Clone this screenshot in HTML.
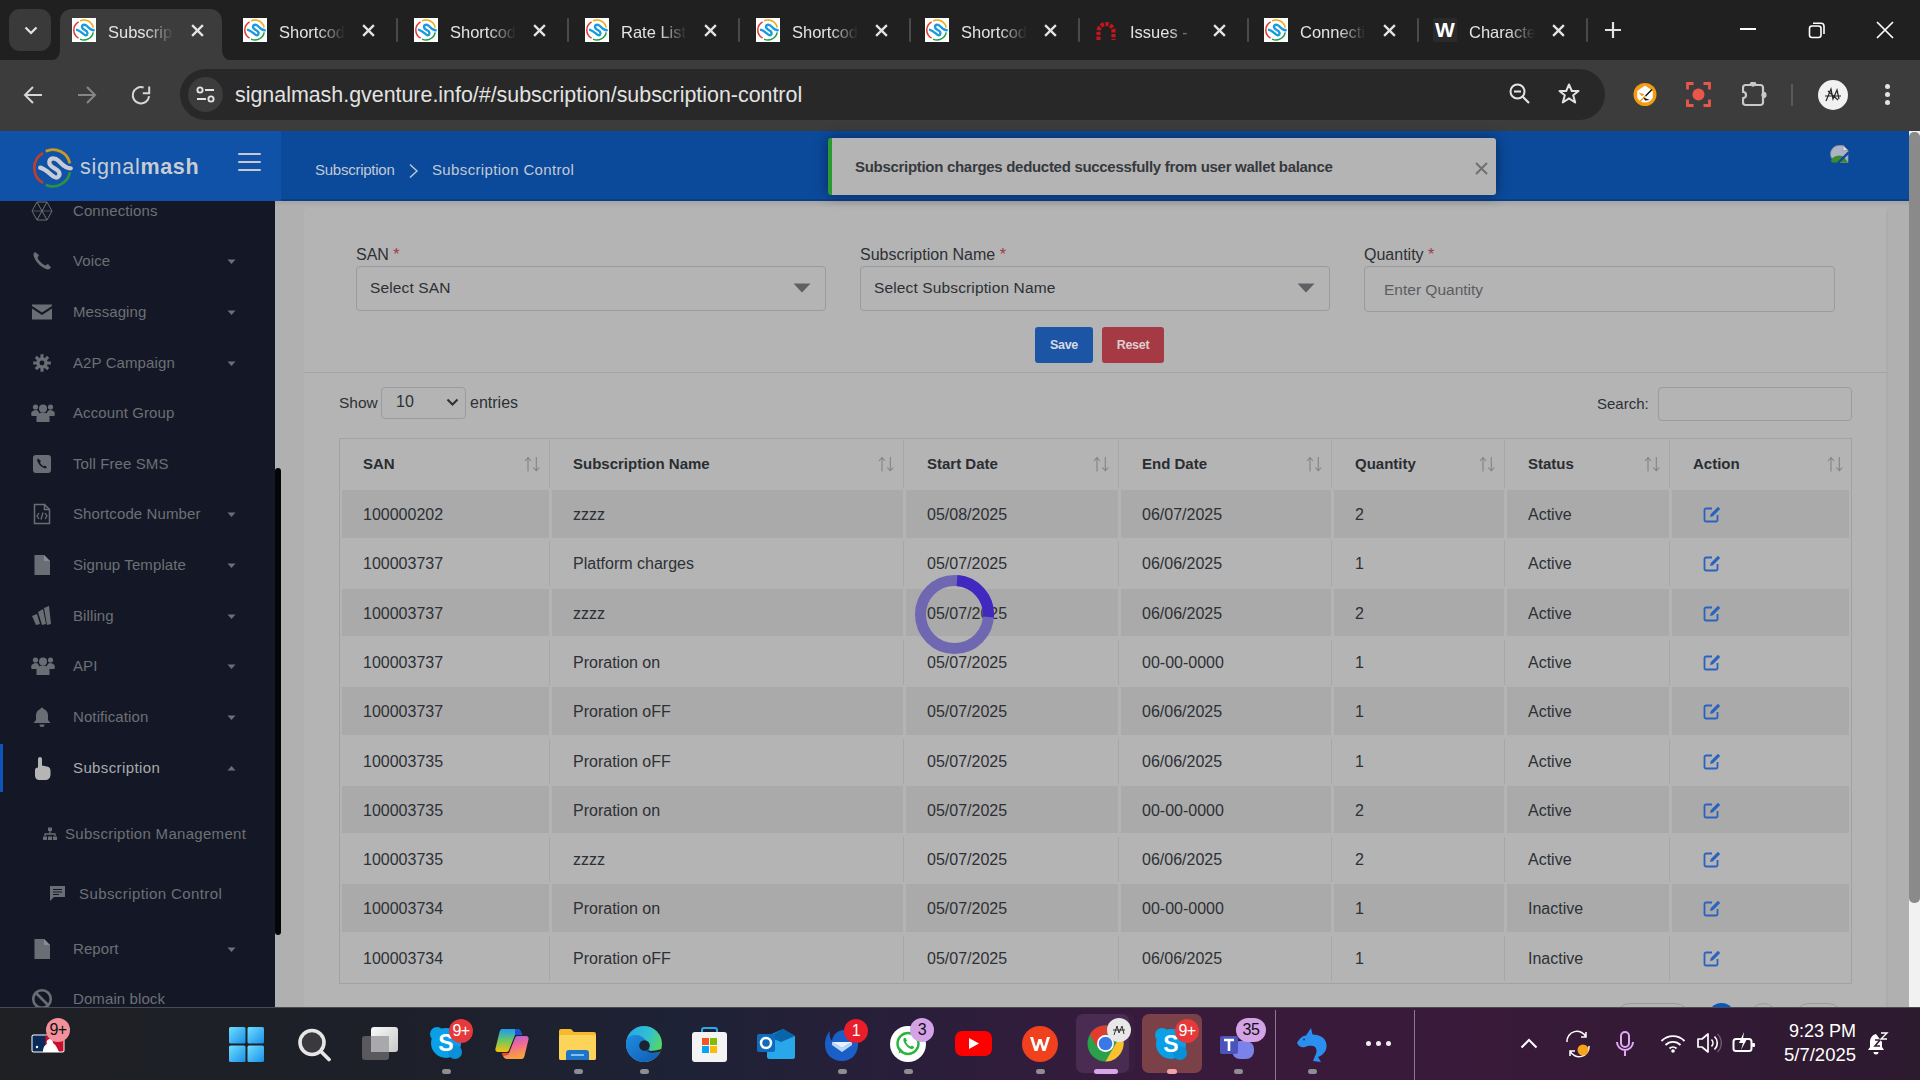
<!DOCTYPE html><html><head><meta charset="utf-8"><style>
*{box-sizing:border-box;margin:0;padding:0}
html,body{width:1920px;height:1080px;overflow:hidden;background:#202020;font-family:"Liberation Sans",sans-serif}
.a{position:absolute}
#tabstrip{position:absolute;left:0;top:0;width:1920px;height:60px;background:#202020}
#toolbar{position:absolute;left:0;top:60px;width:1920px;height:71px;background:#3c3c3c}
#omni{position:absolute;left:180px;top:69px;width:1425px;height:51px;background:#282828;border-radius:26px}
#header{position:absolute;left:0;top:131px;width:1909px;height:70px;background:#0b4a9b}
#logoarea{position:absolute;left:0;top:131px;width:281px;height:70px;background:#0f52a8}
#sidebar{position:absolute;left:0;top:201px;width:275px;height:807px;background:#141826;overflow:hidden}
#content{position:absolute;left:275px;top:201px;width:1634px;height:807px;background:#b0b0b0;overflow:hidden}
#vscroll{position:absolute;left:1909px;top:131px;width:11px;height:877px;background:#f1f1f1}
#taskbar{position:absolute;left:0;top:1008px;width:1920px;height:72px;background:linear-gradient(90deg,#1e2024 0%,#1d2029 20%,#1e2236 36%,#2a1e3a 48%,#381a3c 60%,#3a1a3a 75%,#2c1a2f 100%)}
.tabt{position:absolute;top:19px;height:26px;font-size:16.5px;line-height:26px;color:#e3e3e3;white-space:nowrap;overflow:hidden;width:66px;
 -webkit-mask-image:linear-gradient(90deg,#000 58%,transparent 100%)}
.fav{position:absolute;top:18px;width:24px;height:24px;background:#fff}
.tclose{position:absolute;top:23.5px;width:13px;height:13px}
.tsep{position:absolute;top:18px;width:2px;height:24px;background:#4a4a4a;border-radius:1px}
</style></head><body>
<svg width="0" height="0" style="position:absolute"><defs>
<symbol id="smlogo" viewBox="0 0 24 24">
<path d="M6.6 3.8 A9.4 9.4 0 0 0 6.6 20.2" fill="none" stroke="#e03a2a" stroke-width="1.5"/>
<path d="M8 2.9 A9.4 9.4 0 0 1 21.2 9.6" fill="none" stroke="#f0aa10" stroke-width="1.5"/>
<path d="M21.2 14.3 A9.4 9.4 0 0 1 8 21.1" fill="none" stroke="#1aa040" stroke-width="1.5"/>
<path d="M5 11.8 C8 12.5 10.5 15.5 12.5 16.8 C14.5 18 16.5 16 15 13.8 C13.5 11.8 9.5 11.5 10 8.5 C10.5 6 13.5 6.5 15 8 C16.5 9.5 18.5 12.2 21.7 12.2" fill="none" stroke="#1a9ae0" stroke-width="2.4" stroke-linecap="round"/>
</symbol>
<symbol id="smlogoD" viewBox="0 0 24 24">
<path d="M6.6 3.8 A9.4 9.4 0 0 0 6.6 20.2" fill="none" stroke="#b8402e" stroke-width="1.5"/>
<path d="M8 2.9 A9.4 9.4 0 0 1 21.2 9.6" fill="none" stroke="#c99a22" stroke-width="1.5"/>
<path d="M21.2 14.3 A9.4 9.4 0 0 1 8 21.1" fill="none" stroke="#2d9142" stroke-width="1.5"/>
<path d="M5 11.8 C8 12.5 10.5 15.5 12.5 16.8 C14.5 18 16.5 16 15 13.8 C13.5 11.8 9.5 11.5 10 8.5 C10.5 6 13.5 6.5 15 8 C16.5 9.5 18.5 12.2 21.7 12.2" fill="none" stroke="#c9ccd2" stroke-width="2.3" stroke-linecap="round"/>
</symbol>
<symbol id="xic" viewBox="0 0 14 14"><path d="M1.2 1.2L12.8 12.8M12.8 1.2L1.2 12.8" stroke="#e3e3e3" stroke-width="2.5" fill="none"/></symbol>
</defs></svg>
<div id="tabstrip"></div>
<div class="a" style="left:9px;top:9px;width:42px;height:42px;border-radius:11px;background:#3a3a3a"></div>
<svg class="a" style="left:23px;top:24px" width="16" height="12" viewBox="0 0 16 12"><path d="M2.5 3.5L8 9L13.5 3.5" stroke="#e3e3e3" stroke-width="2.2" fill="none"/></svg>
<svg class="a" style="left:48px;top:9px" width="186" height="52" viewBox="0 0 186 52">
<path d="M0 52 C8 52 12 48 12 40 L12 12 C12 5 17 0 24 0 L162 0 C169 0 174 5 174 12 L174 40 C174 48 178 52 186 52 Z" fill="#3c3c3c"/></svg>
<div class="fav" style="left:72px"><svg width="24" height="24" viewBox="0 0 24 24"><use href="#smlogo"/></svg></div>
<div class="tabt" style="left:108px;width:66px;color:#e3e3e3">Subscription Control</div>
<svg class="tclose" style="left:191px" viewBox="0 0 14 14"><use href="#xic"/></svg>
<div class="fav" style="left:243px"><svg width="24" height="24" viewBox="0 0 24 24"><use href="#smlogo"/></svg></div>
<div class="tabt" style="left:279px;width:66px;color:#e3e3e3">Shortcode</div>
<svg class="tclose" style="left:362px" viewBox="0 0 14 14"><use href="#xic"/></svg>
<div class="tsep" style="left:396px"></div>
<div class="fav" style="left:414px"><svg width="24" height="24" viewBox="0 0 24 24"><use href="#smlogo"/></svg></div>
<div class="tabt" style="left:450px;width:66px;color:#e3e3e3">Shortcode</div>
<svg class="tclose" style="left:533px" viewBox="0 0 14 14"><use href="#xic"/></svg>
<div class="tsep" style="left:567px"></div>
<div class="fav" style="left:585px"><svg width="24" height="24" viewBox="0 0 24 24"><use href="#smlogo"/></svg></div>
<div class="tabt" style="left:621px;width:66px;color:#e3e3e3">Rate List</div>
<svg class="tclose" style="left:704px" viewBox="0 0 14 14"><use href="#xic"/></svg>
<div class="tsep" style="left:738px"></div>
<div class="fav" style="left:756px"><svg width="24" height="24" viewBox="0 0 24 24"><use href="#smlogo"/></svg></div>
<div class="tabt" style="left:792px;width:66px;color:#e3e3e3">Shortcode</div>
<svg class="tclose" style="left:875px" viewBox="0 0 14 14"><use href="#xic"/></svg>
<div class="tsep" style="left:909px"></div>
<div class="fav" style="left:925px"><svg width="24" height="24" viewBox="0 0 24 24"><use href="#smlogo"/></svg></div>
<div class="tabt" style="left:961px;width:66px;color:#e3e3e3">Shortcode</div>
<svg class="tclose" style="left:1044px" viewBox="0 0 14 14"><use href="#xic"/></svg>
<div class="tsep" style="left:1078px"></div>
<svg class="a" style="left:1094px;top:18px" width="24" height="24" viewBox="0 0 24 24">
<path d="M4.5 22V13.5A7.5 7.5 0 0 1 19.5 13.5V22" fill="none" stroke="#c4161c" stroke-width="4.2" stroke-dasharray="3.4 1.5"/></svg>
<div class="tabt" style="left:1130px;width:66px;color:#e3e3e3">Issues - </div>
<svg class="tclose" style="left:1213px" viewBox="0 0 14 14"><use href="#xic"/></svg>
<div class="tsep" style="left:1247px"></div>
<div class="fav" style="left:1264px"><svg width="24" height="24" viewBox="0 0 24 24"><use href="#smlogo"/></svg></div>
<div class="tabt" style="left:1300px;width:66px;color:#e3e3e3">Connections</div>
<svg class="tclose" style="left:1383px" viewBox="0 0 14 14"><use href="#xic"/></svg>
<div class="tsep" style="left:1417px"></div>
<div class="a" style="left:1433px;top:18px;width:24px;height:24px;background:#2a2a2a;color:#fff;font-weight:bold;font-size:21px;line-height:24px;text-align:center">W</div>
<div class="tabt" style="left:1469px;width:66px;color:#e3e3e3">Character</div>
<svg class="tclose" style="left:1552px" viewBox="0 0 14 14"><use href="#xic"/></svg>
<div class="tsep" style="left:1586px"></div>
<svg class="a" style="left:1604px;top:21px" width="18" height="18" viewBox="0 0 18 18"><path d="M9 1V17M1 9H17" stroke="#e3e3e3" stroke-width="2.2"/></svg>
<div class="a" style="left:1740px;top:28px;width:16px;height:2px;background:#fff"></div>
<svg class="a" style="left:1808px;top:21px" width="18" height="18" viewBox="0 0 18 18"><rect x="1.5" y="5" width="11.5" height="11.5" rx="2.5" stroke="#fff" stroke-width="1.6" fill="none"/><path d="M5 2.2 H13 A3 3 0 0 1 16 5.2 V13" stroke="#fff" stroke-width="1.6" fill="none"/></svg>
<svg class="a" style="left:1876px;top:21px" width="18" height="18" viewBox="0 0 18 18"><path d="M1 1L17 17M17 1L1 17" stroke="#fff" stroke-width="1.7"/></svg>
<div id="toolbar"></div>
<div id="omni"></div>
<svg class="a" style="left:22px;top:84px" width="22" height="22" viewBox="0 0 22 22"><path d="M20 11H3.5M11 3L3 11L11 19" stroke="#d6d6d6" stroke-width="2" fill="none"/></svg>
<svg class="a" style="left:76px;top:84px" width="22" height="22" viewBox="0 0 22 22"><path d="M2 11H18.5M11 3L19 11L11 19" stroke="#868686" stroke-width="2" fill="none"/></svg>
<svg class="a" style="left:130px;top:84px" width="22" height="22" viewBox="0 0 22 22"><path d="M19.1 12.2A8.2 8.2 0 1 1 13.6 3.5" stroke="#d6d6d6" stroke-width="2" fill="none"/><path d="M12.8 9.2H19.2V2.6" stroke="#d6d6d6" stroke-width="2" fill="none"/></svg>
<div class="a" style="left:188px;top:77px;width:35px;height:35px;border-radius:50%;background:#3c3c3c"></div>
<svg class="a" style="left:195px;top:84px" width="21" height="21" viewBox="0 0 21 21"><circle cx="5" cy="6" r="2.6" stroke="#e3e3e3" stroke-width="1.9" fill="none"/><path d="M10 6H19M2 15H11" stroke="#e3e3e3" stroke-width="1.9"/><circle cx="16" cy="15" r="2.6" stroke="#e3e3e3" stroke-width="1.9" fill="none"/></svg>
<div class="a" id="url" style="left:235px;top:80px;height:30px;font-size:21.4px;line-height:30px;color:#e3e3e3;white-space:nowrap">signalmash.gventure.info/#/subscription/subscription-control</div>
<svg class="a" style="left:1508px;top:82px" width="24" height="24" viewBox="0 0 24 24"><circle cx="9.5" cy="9.5" r="7" stroke="#e3e3e3" stroke-width="2" fill="none"/><path d="M6 9.5H13M14.5 14.5L21 21" stroke="#e3e3e3" stroke-width="2.2"/></svg>
<svg class="a" style="left:1557px;top:82px" width="24" height="24" viewBox="0 0 24 24"><path d="M12 2.5L14.8 9H21.5L16.2 13.2L18.2 20.5L12 16.3L5.8 20.5L7.8 13.2L2.5 9H9.2Z" stroke="#e3e3e3" stroke-width="2" fill="none" stroke-linejoin="round"/></svg>
<svg class="a" style="left:1633px;top:83px" width="24" height="24" viewBox="0 0 24 24"><circle cx="12" cy="11.5" r="11.5" fill="#f39c12"/><path d="M12 2.6L19.8 8V14.5A8.6 8.6 0 0 1 4.2 14.5V8Z" fill="#fff"/><path d="M19 6.5L12.5 13" stroke="#111" stroke-width="1.4"/><path d="M12.5 13L6.5 19" stroke="#f39c12" stroke-width="1.4"/><path d="M5.5 9.5L11.5 11.2L9 13.3Z" fill="#f39c12"/><path d="M10.5 14.5L16.8 17L12 17.5Z" fill="#111"/></svg>
<svg class="a" style="left:1686px;top:82px" width="25" height="25" viewBox="0 0 25 25"><path d="M1.5 7.5V1.5H7.5M17.5 1.5H23.5V7.5M23.5 17.5V23.5H17.5M7.5 23.5H1.5V17.5" stroke="#e9574a" stroke-width="2.8" fill="none"/><circle cx="12.5" cy="12.5" r="6" fill="#e9574a"/></svg>
<svg class="a" style="left:1742px;top:82px" width="25" height="25" viewBox="0 0 25 25"><path d="M3.5 3H8.5A2.5 2.5 0 0 1 13.5 3H18.5A2.5 2.5 0 0 1 21 5.5V10.5A2.5 2.5 0 0 1 21 15.5V20.5A2.5 2.5 0 0 1 18.5 23H3.5A2.5 2.5 0 0 1 1 20.5V16A3 3 0 0 0 1 10V5.5A2.5 2.5 0 0 1 3.5 3Z" stroke="#c9c9c9" stroke-width="2.2" fill="none" stroke-linejoin="round"/><circle cx="11" cy="2.6" r="2.2" fill="#c9c9c9"/><circle cx="21.4" cy="13" r="2.2" fill="#c9c9c9"/></svg>
<div class="a" style="left:1791px;top:84px;width:2px;height:22px;background:#5a5a5a"></div>
<div class="a" style="left:1818px;top:80px;width:30px;height:30px;border-radius:50%;background:#f1f1f1"></div>
<svg class="a" style="left:1823px;top:85px" width="20" height="20" viewBox="0 0 20 20"><path d="M3 16L8 4L10 14L14 5L16 14M2 11H18M5 6L15 15" stroke="#222" stroke-width="1.2" fill="none"/></svg>
<div class="a" style="left:1885px;top:84px;width:5px;height:5px;border-radius:50%;background:#e3e3e3"></div>
<div class="a" style="left:1885px;top:92px;width:5px;height:5px;border-radius:50%;background:#e3e3e3"></div>
<div class="a" style="left:1885px;top:100px;width:5px;height:5px;border-radius:50%;background:#e3e3e3"></div>
<div id="header"></div><div id="logoarea"></div>
<div class="a" style="left:281px;top:199px;width:1628px;height:2px;background:#0a3f88"></div>
<svg class="a" style="left:31px;top:146px" width="44" height="44" viewBox="0 0 24 24"><use href="#smlogoD"/></svg>
<div class="a" style="left:80px;top:152px;height:30px;line-height:30px;font-size:21.5px;color:#c9ccd2;white-space:nowrap;letter-spacing:0.7px"><span>signal</span><span style="font-weight:bold">mash</span></div>
<div class="a" style="left:238px;top:153px;width:23px;height:2px;background:#c6c9cf;border-radius:1px"></div>
<div class="a" style="left:238px;top:161px;width:23px;height:2px;background:#c6c9cf;border-radius:1px"></div>
<div class="a" style="left:238px;top:169px;width:23px;height:2px;background:#c6c9cf;border-radius:1px"></div>
<div class="a" style="left:315px;top:160px;height:20px;line-height:20px;font-size:15px;color:#c3c9d3;white-space:nowrap;letter-spacing:-0.25px">Subscription</div>
<svg class="a" style="left:408px;top:163px" width="11" height="16" viewBox="0 0 11 16"><path d="M2 1.5L9 8L2 14.5" stroke="#c3c9d3" stroke-width="1.4" fill="none"/></svg>
<div class="a" style="left:432px;top:160px;height:20px;line-height:20px;font-size:15px;color:#c3c9d3;white-space:nowrap;letter-spacing:0.36px">Subscription Control</div>
<svg class="a" style="left:1830px;top:145px" width="19" height="18" viewBox="0 0 19 18"><path d="M9 0.5H13L18 5.5V17.5H9A8.5 8.5 0 0 1 9 0.5Z" fill="#aab4c6" stroke="#8d8f93" stroke-width="0.7"/><path d="M1 16A8 6.5 0 0 1 14.5 12.5L18 17.5H2Z" fill="#3c8a2e"/><path d="M7.5 18.5L18.5 7.5" stroke="#0b4a9b" stroke-width="2.4"/><path d="M13 0.5V5.5H18Z" fill="#e2e2e2" stroke="#8d8f93" stroke-width="0.6"/></svg>
<div id="sidebar">
<div class="a" style="left:31px;top:-1px;width:24px;height:24px"><svg width="22" height="22" viewBox="0 0 22 22"><path d="M6 2H16L21 11L16 20H6L1 11Z" stroke="#6a6e74" stroke-width="1" fill="none"/><path d="M6 2L16 20M16 2L6 20M1 11H21M6 2L11 11L16 2M6 20L11 11L16 20" stroke="#6a6e74" stroke-width="0.7" fill="none"/></svg></div>
<div class="a" style="left:73px;top:-1px;height:22px;line-height:22px;font-size:15px;color:#6c7075;white-space:nowrap;letter-spacing:0.1px">Connections</div>
<div class="a" style="left:31px;top:49px;width:24px;height:24px"><svg width="22" height="22" viewBox="0 0 22 22"><path d="M4 2C2.5 3 2 4.5 3 7C5 12 9 16.5 15 19C17.5 20 19 19 20 17.5L17 14L14 15.5C11 14 8 11 6.5 8L8 5Z" fill="#6a6e74"/></svg></div>
<div class="a" style="left:73px;top:49px;height:22px;line-height:22px;font-size:15px;color:#6c7075;white-space:nowrap;letter-spacing:0.1px">Voice</div>
<svg class="a" style="left:227px;top:58px" width="9" height="6" viewBox="0 0 9 6"><path d="M0.5 0.5L4.5 5L8.5 0.5Z" fill="#6c7075"/></svg>
<div class="a" style="left:31px;top:100px;width:24px;height:24px"><svg width="22" height="22" viewBox="0 0 22 22"><path d="M1 3.5H21V5L11 11.5L1 5Z" fill="#6a6e74"/><path d="M1 7.5L11 14L21 7.5V18.5H1Z" fill="#6a6e74"/></svg></div>
<div class="a" style="left:73px;top:100px;height:22px;line-height:22px;font-size:15px;color:#6c7075;white-space:nowrap;letter-spacing:0.1px">Messaging</div>
<svg class="a" style="left:227px;top:109px" width="9" height="6" viewBox="0 0 9 6"><path d="M0.5 0.5L4.5 5L8.5 0.5Z" fill="#6c7075"/></svg>
<div class="a" style="left:31px;top:151px;width:24px;height:24px"><svg width="22" height="22" viewBox="-1.5 -1.5 25 25"><circle cx="11" cy="11" r="6.5" fill="#6a6e74"/><path d="M11 1V21M1 11H21M4 4L18 18M18 4L4 18" stroke="#6a6e74" stroke-width="3.5"/><circle cx="11" cy="11" r="2.8" fill="#141826"/></svg></div>
<div class="a" style="left:73px;top:151px;height:22px;line-height:22px;font-size:15px;color:#6c7075;white-space:nowrap;letter-spacing:0.1px">A2P Campaign</div>
<svg class="a" style="left:227px;top:160px" width="9" height="6" viewBox="0 0 9 6"><path d="M0.5 0.5L4.5 5L8.5 0.5Z" fill="#6c7075"/></svg>
<div class="a" style="left:31px;top:201px;width:24px;height:24px"><svg width="24" height="22" viewBox="0 0 24 22"><circle cx="12" cy="6.5" r="4" fill="#6a6e74"/><circle cx="4.5" cy="5" r="2.6" fill="#6a6e74"/><circle cx="19.5" cy="5" r="2.6" fill="#6a6e74"/><path d="M5.5 20V15A6.5 4.5 0 0 1 18.5 15V20Z" fill="#6a6e74"/><path d="M0.5 13A4 3.5 0 0 1 8 10.5V14H0.5Z M23.5 13A4 3.5 0 0 0 16 10.5V14H23.5Z" fill="#6a6e74"/></svg></div>
<div class="a" style="left:73px;top:201px;height:22px;line-height:22px;font-size:15px;color:#6c7075;white-space:nowrap;letter-spacing:0.1px">Account Group</div>
<div class="a" style="left:31px;top:252px;width:24px;height:24px"><svg width="22" height="22" viewBox="0 0 22 22"><rect x="2" y="2" width="18" height="18" rx="3" fill="#6a6e74"/><path d="M7 5.5C6 6 6 7 6.5 8.5C7.5 11 9.5 13.5 13 15C14.5 15.5 15.5 15 16 14.5L14 12.5L12.5 13.3C11 12.5 9.8 11.2 9 9.6L10 8Z" fill="#141826"/></svg></div>
<div class="a" style="left:73px;top:252px;height:22px;line-height:22px;font-size:15px;color:#6c7075;white-space:nowrap;letter-spacing:0.1px">Toll Free SMS</div>
<div class="a" style="left:31px;top:302px;width:24px;height:24px"><svg width="22" height="22" viewBox="0 0 22 22"><path d="M3.5 1.5H13.5L18.5 6.5V20.5H3.5Z" stroke="#6a6e74" stroke-width="1.5" fill="none"/><path d="M13.5 1.5V6.5H18.5" stroke="#6a6e74" stroke-width="1.5" fill="none"/><path d="M8 10L6 13L8 16M14 10L16 13L14 16M12 9.5L10 16.5" stroke="#6a6e74" stroke-width="1.3" fill="none"/></svg></div>
<div class="a" style="left:73px;top:302px;height:22px;line-height:22px;font-size:15px;color:#6c7075;white-space:nowrap;letter-spacing:0.1px">Shortcode Number</div>
<svg class="a" style="left:227px;top:311px" width="9" height="6" viewBox="0 0 9 6"><path d="M0.5 0.5L4.5 5L8.5 0.5Z" fill="#6c7075"/></svg>
<div class="a" style="left:31px;top:353px;width:24px;height:24px"><svg width="22" height="22" viewBox="0 0 22 22"><path d="M3.5 1H13L19 7V21H3.5Z" fill="#6a6e74"/><path d="M13 1V7H19" fill="#8a8e94"/></svg></div>
<div class="a" style="left:73px;top:353px;height:22px;line-height:22px;font-size:15px;color:#6c7075;white-space:nowrap;letter-spacing:0.1px">Signup Template</div>
<svg class="a" style="left:227px;top:362px" width="9" height="6" viewBox="0 0 9 6"><path d="M0.5 0.5L4.5 5L8.5 0.5Z" fill="#6c7075"/></svg>
<div class="a" style="left:31px;top:404px;width:24px;height:24px"><svg width="22" height="22" viewBox="0 0 22 22"><path d="M1 11L6 9L9 19L5 20Z M7 7L12 4L15 19L11 20Z M13 3L18 1L20 19L16 20Z" fill="#6a6e74"/></svg></div>
<div class="a" style="left:73px;top:404px;height:22px;line-height:22px;font-size:15px;color:#6c7075;white-space:nowrap;letter-spacing:0.1px">Billing</div>
<svg class="a" style="left:227px;top:413px" width="9" height="6" viewBox="0 0 9 6"><path d="M0.5 0.5L4.5 5L8.5 0.5Z" fill="#6c7075"/></svg>
<div class="a" style="left:31px;top:454px;width:24px;height:24px"><svg width="24" height="22" viewBox="0 0 24 22"><circle cx="12" cy="6.5" r="4" fill="#6a6e74"/><circle cx="4.5" cy="5" r="2.6" fill="#6a6e74"/><circle cx="19.5" cy="5" r="2.6" fill="#6a6e74"/><path d="M5.5 20V15A6.5 4.5 0 0 1 18.5 15V20Z" fill="#6a6e74"/><path d="M0.5 13A4 3.5 0 0 1 8 10.5V14H0.5Z M23.5 13A4 3.5 0 0 0 16 10.5V14H23.5Z" fill="#6a6e74"/></svg></div>
<div class="a" style="left:73px;top:454px;height:22px;line-height:22px;font-size:15px;color:#6c7075;white-space:nowrap;letter-spacing:0.1px">API</div>
<svg class="a" style="left:227px;top:463px" width="9" height="6" viewBox="0 0 9 6"><path d="M0.5 0.5L4.5 5L8.5 0.5Z" fill="#6c7075"/></svg>
<div class="a" style="left:31px;top:505px;width:24px;height:24px"><svg width="22" height="22" viewBox="0 0 22 22"><path d="M11 1.5A1.8 1.8 0 0 1 12.6 3C15.5 3.8 17 6.5 17 9.5V14L19.5 17H2.5L5 14V9.5C5 6.5 6.5 3.8 9.4 3A1.8 1.8 0 0 1 11 1.5Z M8.5 18.5H13.5A2.5 2.5 0 0 1 8.5 18.5Z" fill="#6a6e74"/></svg></div>
<div class="a" style="left:73px;top:505px;height:22px;line-height:22px;font-size:15px;color:#6c7075;white-space:nowrap;letter-spacing:0.1px">Notification</div>
<svg class="a" style="left:227px;top:514px" width="9" height="6" viewBox="0 0 9 6"><path d="M0.5 0.5L4.5 5L8.5 0.5Z" fill="#6c7075"/></svg>
<div class="a" style="left:31px;top:556px;width:24px;height:24px"><svg width="22" height="24" viewBox="0 0 22 24"><path d="M7 2A2 2 0 0 1 11 2V8.5L16 9.5C18.5 10 19.5 11.5 19.5 14V17.5C19.5 21 17.5 23 14 23H9C5.5 23 4 21 4 18V13C4 11.5 5 10.5 7 10.5Z" fill="#b5b5b5"/></svg></div>
<div class="a" style="left:73px;top:556px;height:22px;line-height:22px;font-size:15px;color:#a9abad;white-space:nowrap;letter-spacing:0.38px">Subscription</div>
<svg class="a" style="left:227px;top:564px" width="9" height="6" viewBox="0 0 9 6"><path d="M0.5 5.5L4.5 1L8.5 5.5Z" fill="#6c7075"/></svg>
<div class="a" style="left:31px;top:737px;width:24px;height:24px"><svg width="22" height="22" viewBox="0 0 22 22"><path d="M3.5 1H13L19 7V21H3.5Z" fill="#6a6e74"/><path d="M13 1V7H19" fill="#8a8e94"/></svg></div>
<div class="a" style="left:73px;top:737px;height:22px;line-height:22px;font-size:15px;color:#6c7075;white-space:nowrap;letter-spacing:0.1px">Report</div>
<svg class="a" style="left:227px;top:746px" width="9" height="6" viewBox="0 0 9 6"><path d="M0.5 0.5L4.5 5L8.5 0.5Z" fill="#6c7075"/></svg>
<div class="a" style="left:31px;top:787px;width:24px;height:24px"><svg width="22" height="22" viewBox="0 0 22 22"><circle cx="11" cy="11" r="8.8" stroke="#6a6e74" stroke-width="2.6" fill="none"/><path d="M5 5L17 17" stroke="#6a6e74" stroke-width="2.6"/></svg></div>
<div class="a" style="left:73px;top:787px;height:22px;line-height:22px;font-size:15px;color:#6c7075;white-space:nowrap;letter-spacing:0.1px">Domain block</div>
<div class="a" style="left:0;top:543px;width:3px;height:48px;background:#0d56b8"></div>
<svg class="a" style="left:42px;top:626px" width="16" height="14" viewBox="0 0 16 14"><rect x="6" y="0.5" width="4" height="3.5" fill="#6a6e74"/><path d="M8 4V7M3 9V7H13V9" stroke="#6a6e74" stroke-width="1.3" fill="none"/><rect x="1" y="9.5" width="4" height="3.5" fill="#6a6e74"/><rect x="6" y="9.5" width="4" height="3.5" fill="#6a6e74"/><rect x="11" y="9.5" width="4" height="3.5" fill="#6a6e74"/></svg>
<div class="a" style="left:65px;top:622px;height:22px;line-height:22px;font-size:15px;color:#6c7075;white-space:nowrap;letter-spacing:0.3px">Subscription Management</div>
<svg class="a" style="left:49px;top:684px" width="17" height="17" viewBox="0 0 17 17"><path d="M1 1H16V12H5L1 16Z" fill="#6a6e74"/><path d="M4 4.5H13M4 7H13M4 9.5H10" stroke="#141826" stroke-width="1.2"/></svg>
<div class="a" style="left:79px;top:682px;height:22px;line-height:22px;font-size:15px;color:#6c7075;white-space:nowrap;letter-spacing:0.41px">Subscription Control</div>
</div>
<div id="content"></div>
<div class="a" style="left:275px;top:201px;width:1634px;height:6px;background:linear-gradient(#a5a5a5,#b2b2b2)"></div>
<div class="a" style="left:304px;top:207px;width:1583px;height:801px;background:#b4b4b4;border-radius:5px"></div>
<div class="a" style="left:1886px;top:212px;width:2px;height:796px;background:#acacac"></div>
<div class="a" style="left:304px;top:372px;width:1583px;height:1px;background:#a4a4a4"></div>
<div class="a" style="left:356px;top:245px;height:20px;line-height:20px;font-size:16px;color:#2d3034;white-space:nowrap">SAN <span style="color:#9c3a48">*</span></div>
<div class="a" style="left:356px;top:266px;width:470px;height:45px;border:1px solid #999b9e;border-radius:4px"></div>
<div class="a" style="left:370px;top:278px;height:20px;line-height:20px;font-size:15.5px;color:#2d3034;white-space:nowrap;letter-spacing:0.13px">Select SAN</div>
<svg class="a" style="left:793px;top:283px" width="18" height="10" viewBox="0 0 18 10"><path d="M0.5 0.5H17.5L9 9.5Z" fill="#5e6063"/></svg>
<div class="a" style="left:860px;top:245px;height:20px;line-height:20px;font-size:16px;color:#2d3034;white-space:nowrap">Subscription Name <span style="color:#9c3a48">*</span></div>
<div class="a" style="left:860px;top:266px;width:470px;height:45px;border:1px solid #999b9e;border-radius:4px"></div>
<div class="a" style="left:874px;top:278px;height:20px;line-height:20px;font-size:15.5px;color:#2d3034;white-space:nowrap;letter-spacing:0.13px">Select Subscription Name</div>
<svg class="a" style="left:1297px;top:283px" width="18" height="10" viewBox="0 0 18 10"><path d="M0.5 0.5H17.5L9 9.5Z" fill="#5e6063"/></svg>
<div class="a" style="left:1364px;top:245px;height:20px;line-height:20px;font-size:16px;color:#2d3034;white-space:nowrap">Quantity <span style="color:#9c3a48">*</span></div>
<div class="a" style="left:1364px;top:266px;width:471px;height:46px;border:1px solid #999b9e;border-radius:4px"></div>
<div class="a" style="left:1384px;top:280px;height:20px;line-height:20px;font-size:15.5px;color:#5a5d60;white-space:nowrap;letter-spacing:0px">Enter Quantity</div>
<div class="a" style="left:1035px;top:327px;width:58px;height:36px;background:#1d55a6;border-radius:3px;color:#d6dbe4;font-size:12.5px;font-weight:bold;line-height:36px;text-align:center;letter-spacing:-0.3px">Save</div>
<div class="a" style="left:1102px;top:327px;width:62px;height:36px;background:#a63a44;border-radius:3px;color:#dccfd0;font-size:12.5px;font-weight:bold;line-height:36px;text-align:center;letter-spacing:-0.3px">Reset</div>
<div class="a" style="left:339px;top:393px;height:20px;line-height:20px;font-size:15.5px;color:#2d3034">Show</div>
<div class="a" style="left:381px;top:387px;width:85px;height:32px;border:1px solid #999b9e;border-radius:4px"></div>
<div class="a" style="left:396px;top:392px;height:20px;line-height:20px;font-size:16px;color:#2d3034">10</div>
<svg class="a" style="left:446px;top:398px" width="13" height="9" viewBox="0 0 13 9"><path d="M1.5 1.5L6.5 6.5L11.5 1.5" stroke="#2d3034" stroke-width="2" fill="none"/></svg>
<div class="a" style="left:470px;top:393px;height:20px;line-height:20px;font-size:16px;color:#2d3034">entries</div>
<div class="a" style="left:1597px;top:394px;height:20px;line-height:20px;font-size:15px;color:#2d3034">Search:</div>
<div class="a" style="left:1658px;top:387px;width:194px;height:34px;border:1px solid #999b9e;border-radius:4px"></div>
<div class="a" style="left:339px;top:438px;width:1513px;height:546px;border:1px solid #9fa3a8"></div>
<div class="a" style="left:363px;top:453px;height:22px;line-height:22px;font-size:15px;font-weight:bold;color:#2a2d31;white-space:nowrap">SAN</div>
<svg class="a" style="left:524px;top:456px" width="16" height="16" viewBox="0 0 16 16"><path d="M4 15.5V1.8M1 5L4 1.5L7 5" stroke="#808387" stroke-width="1.1" fill="none"/><path d="M12.3 1V14.8M9.3 11.5L12.3 14.8L15.3 11.5" stroke="#808387" stroke-width="1.1" fill="none"/></svg>
<div class="a" style="left:573px;top:453px;height:22px;line-height:22px;font-size:15px;font-weight:bold;color:#2a2d31;white-space:nowrap">Subscription Name</div>
<svg class="a" style="left:878px;top:456px" width="16" height="16" viewBox="0 0 16 16"><path d="M4 15.5V1.8M1 5L4 1.5L7 5" stroke="#808387" stroke-width="1.1" fill="none"/><path d="M12.3 1V14.8M9.3 11.5L12.3 14.8L15.3 11.5" stroke="#808387" stroke-width="1.1" fill="none"/></svg>
<div class="a" style="left:549px;top:440px;width:1px;height:48px;background:#a4a8ac"></div>
<div class="a" style="left:927px;top:453px;height:22px;line-height:22px;font-size:15px;font-weight:bold;color:#2a2d31;white-space:nowrap">Start Date</div>
<svg class="a" style="left:1093px;top:456px" width="16" height="16" viewBox="0 0 16 16"><path d="M4 15.5V1.8M1 5L4 1.5L7 5" stroke="#808387" stroke-width="1.1" fill="none"/><path d="M12.3 1V14.8M9.3 11.5L12.3 14.8L15.3 11.5" stroke="#808387" stroke-width="1.1" fill="none"/></svg>
<div class="a" style="left:903px;top:440px;width:1px;height:48px;background:#a4a8ac"></div>
<div class="a" style="left:1142px;top:453px;height:22px;line-height:22px;font-size:15px;font-weight:bold;color:#2a2d31;white-space:nowrap">End Date</div>
<svg class="a" style="left:1306px;top:456px" width="16" height="16" viewBox="0 0 16 16"><path d="M4 15.5V1.8M1 5L4 1.5L7 5" stroke="#808387" stroke-width="1.1" fill="none"/><path d="M12.3 1V14.8M9.3 11.5L12.3 14.8L15.3 11.5" stroke="#808387" stroke-width="1.1" fill="none"/></svg>
<div class="a" style="left:1118px;top:440px;width:1px;height:48px;background:#a4a8ac"></div>
<div class="a" style="left:1355px;top:453px;height:22px;line-height:22px;font-size:15px;font-weight:bold;color:#2a2d31;white-space:nowrap">Quantity</div>
<svg class="a" style="left:1479px;top:456px" width="16" height="16" viewBox="0 0 16 16"><path d="M4 15.5V1.8M1 5L4 1.5L7 5" stroke="#808387" stroke-width="1.1" fill="none"/><path d="M12.3 1V14.8M9.3 11.5L12.3 14.8L15.3 11.5" stroke="#808387" stroke-width="1.1" fill="none"/></svg>
<div class="a" style="left:1331px;top:440px;width:1px;height:48px;background:#a4a8ac"></div>
<div class="a" style="left:1528px;top:453px;height:22px;line-height:22px;font-size:15px;font-weight:bold;color:#2a2d31;white-space:nowrap">Status</div>
<svg class="a" style="left:1644px;top:456px" width="16" height="16" viewBox="0 0 16 16"><path d="M4 15.5V1.8M1 5L4 1.5L7 5" stroke="#808387" stroke-width="1.1" fill="none"/><path d="M12.3 1V14.8M9.3 11.5L12.3 14.8L15.3 11.5" stroke="#808387" stroke-width="1.1" fill="none"/></svg>
<div class="a" style="left:1504px;top:440px;width:1px;height:48px;background:#a4a8ac"></div>
<div class="a" style="left:1693px;top:453px;height:22px;line-height:22px;font-size:15px;font-weight:bold;color:#2a2d31;white-space:nowrap">Action</div>
<svg class="a" style="left:1827px;top:456px" width="16" height="16" viewBox="0 0 16 16"><path d="M4 15.5V1.8M1 5L4 1.5L7 5" stroke="#808387" stroke-width="1.1" fill="none"/><path d="M12.3 1V14.8M9.3 11.5L12.3 14.8L15.3 11.5" stroke="#808387" stroke-width="1.1" fill="none"/></svg>
<div class="a" style="left:1669px;top:440px;width:1px;height:48px;background:#a4a8ac"></div>
<div class="a" style="left:342px;top:490.0px;width:207px;height:47.5px;background:#aaaaaa"></div>
<div class="a" style="left:551.5px;top:490.0px;width:351.5px;height:47.5px;background:#aaaaaa"></div>
<div class="a" style="left:905.5px;top:490.0px;width:212.5px;height:47.5px;background:#aaaaaa"></div>
<div class="a" style="left:1120.5px;top:490.0px;width:210.5px;height:47.5px;background:#aaaaaa"></div>
<div class="a" style="left:1333.5px;top:490.0px;width:170.5px;height:47.5px;background:#aaaaaa"></div>
<div class="a" style="left:1506.5px;top:490.0px;width:162.5px;height:47.5px;background:#aaaaaa"></div>
<div class="a" style="left:1671.5px;top:490.0px;width:177.5px;height:47.5px;background:#aaaaaa"></div>
<div class="a" style="left:363px;top:504.0px;height:22px;line-height:22px;font-size:16px;color:#2d3034;white-space:nowrap">100000202</div>
<div class="a" style="left:573px;top:504.0px;height:22px;line-height:22px;font-size:16px;color:#2d3034;white-space:nowrap">zzzz</div>
<div class="a" style="left:927px;top:504.0px;height:22px;line-height:22px;font-size:16px;color:#2d3034;white-space:nowrap">05/08/2025</div>
<div class="a" style="left:1142px;top:504.0px;height:22px;line-height:22px;font-size:16px;color:#2d3034;white-space:nowrap">06/07/2025</div>
<div class="a" style="left:1355px;top:504.0px;height:22px;line-height:22px;font-size:16px;color:#2d3034;white-space:nowrap">2</div>
<div class="a" style="left:1528px;top:504.0px;height:22px;line-height:22px;font-size:16px;color:#2d3034;white-space:nowrap">Active</div>
<svg class="a" style="left:1703px;top:506.0px" width="18" height="17" viewBox="0 0 18 17"><path d="M9 2.5H3A1.5 1.5 0 0 0 1.5 4V14A1.5 1.5 0 0 0 3 15.5H13A1.5 1.5 0 0 0 14.5 14V9" stroke="#2a62c0" stroke-width="1.8" fill="none"/><path d="M15 0.8L17.2 3L10 10.2L7 11L7.8 8Z" fill="#2a62c0"/></svg>
<div class="a" style="left:549px;top:541.3px;width:1px;height:45px;background:#a4a8ac"></div>
<div class="a" style="left:903px;top:541.3px;width:1px;height:45px;background:#a4a8ac"></div>
<div class="a" style="left:1118px;top:541.3px;width:1px;height:45px;background:#a4a8ac"></div>
<div class="a" style="left:1331px;top:541.3px;width:1px;height:45px;background:#a4a8ac"></div>
<div class="a" style="left:1504px;top:541.3px;width:1px;height:45px;background:#a4a8ac"></div>
<div class="a" style="left:1669px;top:541.3px;width:1px;height:45px;background:#a4a8ac"></div>
<div class="a" style="left:363px;top:553.3px;height:22px;line-height:22px;font-size:16px;color:#2d3034;white-space:nowrap">100003737</div>
<div class="a" style="left:573px;top:553.3px;height:22px;line-height:22px;font-size:16px;color:#2d3034;white-space:nowrap">Platform charges</div>
<div class="a" style="left:927px;top:553.3px;height:22px;line-height:22px;font-size:16px;color:#2d3034;white-space:nowrap">05/07/2025</div>
<div class="a" style="left:1142px;top:553.3px;height:22px;line-height:22px;font-size:16px;color:#2d3034;white-space:nowrap">06/06/2025</div>
<div class="a" style="left:1355px;top:553.3px;height:22px;line-height:22px;font-size:16px;color:#2d3034;white-space:nowrap">1</div>
<div class="a" style="left:1528px;top:553.3px;height:22px;line-height:22px;font-size:16px;color:#2d3034;white-space:nowrap">Active</div>
<svg class="a" style="left:1703px;top:555.3px" width="18" height="17" viewBox="0 0 18 17"><path d="M9 2.5H3A1.5 1.5 0 0 0 1.5 4V14A1.5 1.5 0 0 0 3 15.5H13A1.5 1.5 0 0 0 14.5 14V9" stroke="#2a62c0" stroke-width="1.8" fill="none"/><path d="M15 0.8L17.2 3L10 10.2L7 11L7.8 8Z" fill="#2a62c0"/></svg>
<div class="a" style="left:342px;top:588.6px;width:207px;height:47.5px;background:#aaaaaa"></div>
<div class="a" style="left:551.5px;top:588.6px;width:351.5px;height:47.5px;background:#aaaaaa"></div>
<div class="a" style="left:905.5px;top:588.6px;width:212.5px;height:47.5px;background:#aaaaaa"></div>
<div class="a" style="left:1120.5px;top:588.6px;width:210.5px;height:47.5px;background:#aaaaaa"></div>
<div class="a" style="left:1333.5px;top:588.6px;width:170.5px;height:47.5px;background:#aaaaaa"></div>
<div class="a" style="left:1506.5px;top:588.6px;width:162.5px;height:47.5px;background:#aaaaaa"></div>
<div class="a" style="left:1671.5px;top:588.6px;width:177.5px;height:47.5px;background:#aaaaaa"></div>
<div class="a" style="left:363px;top:602.6px;height:22px;line-height:22px;font-size:16px;color:#2d3034;white-space:nowrap">100003737</div>
<div class="a" style="left:573px;top:602.6px;height:22px;line-height:22px;font-size:16px;color:#2d3034;white-space:nowrap">zzzz</div>
<div class="a" style="left:927px;top:602.6px;height:22px;line-height:22px;font-size:16px;color:#2d3034;white-space:nowrap">05/07/2025</div>
<div class="a" style="left:1142px;top:602.6px;height:22px;line-height:22px;font-size:16px;color:#2d3034;white-space:nowrap">06/06/2025</div>
<div class="a" style="left:1355px;top:602.6px;height:22px;line-height:22px;font-size:16px;color:#2d3034;white-space:nowrap">2</div>
<div class="a" style="left:1528px;top:602.6px;height:22px;line-height:22px;font-size:16px;color:#2d3034;white-space:nowrap">Active</div>
<svg class="a" style="left:1703px;top:604.6px" width="18" height="17" viewBox="0 0 18 17"><path d="M9 2.5H3A1.5 1.5 0 0 0 1.5 4V14A1.5 1.5 0 0 0 3 15.5H13A1.5 1.5 0 0 0 14.5 14V9" stroke="#2a62c0" stroke-width="1.8" fill="none"/><path d="M15 0.8L17.2 3L10 10.2L7 11L7.8 8Z" fill="#2a62c0"/></svg>
<div class="a" style="left:549px;top:639.9px;width:1px;height:45px;background:#a4a8ac"></div>
<div class="a" style="left:903px;top:639.9px;width:1px;height:45px;background:#a4a8ac"></div>
<div class="a" style="left:1118px;top:639.9px;width:1px;height:45px;background:#a4a8ac"></div>
<div class="a" style="left:1331px;top:639.9px;width:1px;height:45px;background:#a4a8ac"></div>
<div class="a" style="left:1504px;top:639.9px;width:1px;height:45px;background:#a4a8ac"></div>
<div class="a" style="left:1669px;top:639.9px;width:1px;height:45px;background:#a4a8ac"></div>
<div class="a" style="left:363px;top:651.9px;height:22px;line-height:22px;font-size:16px;color:#2d3034;white-space:nowrap">100003737</div>
<div class="a" style="left:573px;top:651.9px;height:22px;line-height:22px;font-size:16px;color:#2d3034;white-space:nowrap">Proration on</div>
<div class="a" style="left:927px;top:651.9px;height:22px;line-height:22px;font-size:16px;color:#2d3034;white-space:nowrap">05/07/2025</div>
<div class="a" style="left:1142px;top:651.9px;height:22px;line-height:22px;font-size:16px;color:#2d3034;white-space:nowrap">00-00-0000</div>
<div class="a" style="left:1355px;top:651.9px;height:22px;line-height:22px;font-size:16px;color:#2d3034;white-space:nowrap">1</div>
<div class="a" style="left:1528px;top:651.9px;height:22px;line-height:22px;font-size:16px;color:#2d3034;white-space:nowrap">Active</div>
<svg class="a" style="left:1703px;top:653.9px" width="18" height="17" viewBox="0 0 18 17"><path d="M9 2.5H3A1.5 1.5 0 0 0 1.5 4V14A1.5 1.5 0 0 0 3 15.5H13A1.5 1.5 0 0 0 14.5 14V9" stroke="#2a62c0" stroke-width="1.8" fill="none"/><path d="M15 0.8L17.2 3L10 10.2L7 11L7.8 8Z" fill="#2a62c0"/></svg>
<div class="a" style="left:342px;top:687.2px;width:207px;height:47.5px;background:#aaaaaa"></div>
<div class="a" style="left:551.5px;top:687.2px;width:351.5px;height:47.5px;background:#aaaaaa"></div>
<div class="a" style="left:905.5px;top:687.2px;width:212.5px;height:47.5px;background:#aaaaaa"></div>
<div class="a" style="left:1120.5px;top:687.2px;width:210.5px;height:47.5px;background:#aaaaaa"></div>
<div class="a" style="left:1333.5px;top:687.2px;width:170.5px;height:47.5px;background:#aaaaaa"></div>
<div class="a" style="left:1506.5px;top:687.2px;width:162.5px;height:47.5px;background:#aaaaaa"></div>
<div class="a" style="left:1671.5px;top:687.2px;width:177.5px;height:47.5px;background:#aaaaaa"></div>
<div class="a" style="left:363px;top:701.2px;height:22px;line-height:22px;font-size:16px;color:#2d3034;white-space:nowrap">100003737</div>
<div class="a" style="left:573px;top:701.2px;height:22px;line-height:22px;font-size:16px;color:#2d3034;white-space:nowrap">Proration oFF</div>
<div class="a" style="left:927px;top:701.2px;height:22px;line-height:22px;font-size:16px;color:#2d3034;white-space:nowrap">05/07/2025</div>
<div class="a" style="left:1142px;top:701.2px;height:22px;line-height:22px;font-size:16px;color:#2d3034;white-space:nowrap">06/06/2025</div>
<div class="a" style="left:1355px;top:701.2px;height:22px;line-height:22px;font-size:16px;color:#2d3034;white-space:nowrap">1</div>
<div class="a" style="left:1528px;top:701.2px;height:22px;line-height:22px;font-size:16px;color:#2d3034;white-space:nowrap">Active</div>
<svg class="a" style="left:1703px;top:703.2px" width="18" height="17" viewBox="0 0 18 17"><path d="M9 2.5H3A1.5 1.5 0 0 0 1.5 4V14A1.5 1.5 0 0 0 3 15.5H13A1.5 1.5 0 0 0 14.5 14V9" stroke="#2a62c0" stroke-width="1.8" fill="none"/><path d="M15 0.8L17.2 3L10 10.2L7 11L7.8 8Z" fill="#2a62c0"/></svg>
<div class="a" style="left:549px;top:738.5px;width:1px;height:45px;background:#a4a8ac"></div>
<div class="a" style="left:903px;top:738.5px;width:1px;height:45px;background:#a4a8ac"></div>
<div class="a" style="left:1118px;top:738.5px;width:1px;height:45px;background:#a4a8ac"></div>
<div class="a" style="left:1331px;top:738.5px;width:1px;height:45px;background:#a4a8ac"></div>
<div class="a" style="left:1504px;top:738.5px;width:1px;height:45px;background:#a4a8ac"></div>
<div class="a" style="left:1669px;top:738.5px;width:1px;height:45px;background:#a4a8ac"></div>
<div class="a" style="left:363px;top:750.5px;height:22px;line-height:22px;font-size:16px;color:#2d3034;white-space:nowrap">100003735</div>
<div class="a" style="left:573px;top:750.5px;height:22px;line-height:22px;font-size:16px;color:#2d3034;white-space:nowrap">Proration oFF</div>
<div class="a" style="left:927px;top:750.5px;height:22px;line-height:22px;font-size:16px;color:#2d3034;white-space:nowrap">05/07/2025</div>
<div class="a" style="left:1142px;top:750.5px;height:22px;line-height:22px;font-size:16px;color:#2d3034;white-space:nowrap">06/06/2025</div>
<div class="a" style="left:1355px;top:750.5px;height:22px;line-height:22px;font-size:16px;color:#2d3034;white-space:nowrap">1</div>
<div class="a" style="left:1528px;top:750.5px;height:22px;line-height:22px;font-size:16px;color:#2d3034;white-space:nowrap">Active</div>
<svg class="a" style="left:1703px;top:752.5px" width="18" height="17" viewBox="0 0 18 17"><path d="M9 2.5H3A1.5 1.5 0 0 0 1.5 4V14A1.5 1.5 0 0 0 3 15.5H13A1.5 1.5 0 0 0 14.5 14V9" stroke="#2a62c0" stroke-width="1.8" fill="none"/><path d="M15 0.8L17.2 3L10 10.2L7 11L7.8 8Z" fill="#2a62c0"/></svg>
<div class="a" style="left:342px;top:785.8px;width:207px;height:47.5px;background:#aaaaaa"></div>
<div class="a" style="left:551.5px;top:785.8px;width:351.5px;height:47.5px;background:#aaaaaa"></div>
<div class="a" style="left:905.5px;top:785.8px;width:212.5px;height:47.5px;background:#aaaaaa"></div>
<div class="a" style="left:1120.5px;top:785.8px;width:210.5px;height:47.5px;background:#aaaaaa"></div>
<div class="a" style="left:1333.5px;top:785.8px;width:170.5px;height:47.5px;background:#aaaaaa"></div>
<div class="a" style="left:1506.5px;top:785.8px;width:162.5px;height:47.5px;background:#aaaaaa"></div>
<div class="a" style="left:1671.5px;top:785.8px;width:177.5px;height:47.5px;background:#aaaaaa"></div>
<div class="a" style="left:363px;top:799.8px;height:22px;line-height:22px;font-size:16px;color:#2d3034;white-space:nowrap">100003735</div>
<div class="a" style="left:573px;top:799.8px;height:22px;line-height:22px;font-size:16px;color:#2d3034;white-space:nowrap">Proration on</div>
<div class="a" style="left:927px;top:799.8px;height:22px;line-height:22px;font-size:16px;color:#2d3034;white-space:nowrap">05/07/2025</div>
<div class="a" style="left:1142px;top:799.8px;height:22px;line-height:22px;font-size:16px;color:#2d3034;white-space:nowrap">00-00-0000</div>
<div class="a" style="left:1355px;top:799.8px;height:22px;line-height:22px;font-size:16px;color:#2d3034;white-space:nowrap">2</div>
<div class="a" style="left:1528px;top:799.8px;height:22px;line-height:22px;font-size:16px;color:#2d3034;white-space:nowrap">Active</div>
<svg class="a" style="left:1703px;top:801.8px" width="18" height="17" viewBox="0 0 18 17"><path d="M9 2.5H3A1.5 1.5 0 0 0 1.5 4V14A1.5 1.5 0 0 0 3 15.5H13A1.5 1.5 0 0 0 14.5 14V9" stroke="#2a62c0" stroke-width="1.8" fill="none"/><path d="M15 0.8L17.2 3L10 10.2L7 11L7.8 8Z" fill="#2a62c0"/></svg>
<div class="a" style="left:549px;top:837.0999999999999px;width:1px;height:45px;background:#a4a8ac"></div>
<div class="a" style="left:903px;top:837.0999999999999px;width:1px;height:45px;background:#a4a8ac"></div>
<div class="a" style="left:1118px;top:837.0999999999999px;width:1px;height:45px;background:#a4a8ac"></div>
<div class="a" style="left:1331px;top:837.0999999999999px;width:1px;height:45px;background:#a4a8ac"></div>
<div class="a" style="left:1504px;top:837.0999999999999px;width:1px;height:45px;background:#a4a8ac"></div>
<div class="a" style="left:1669px;top:837.0999999999999px;width:1px;height:45px;background:#a4a8ac"></div>
<div class="a" style="left:363px;top:849.0999999999999px;height:22px;line-height:22px;font-size:16px;color:#2d3034;white-space:nowrap">100003735</div>
<div class="a" style="left:573px;top:849.0999999999999px;height:22px;line-height:22px;font-size:16px;color:#2d3034;white-space:nowrap">zzzz</div>
<div class="a" style="left:927px;top:849.0999999999999px;height:22px;line-height:22px;font-size:16px;color:#2d3034;white-space:nowrap">05/07/2025</div>
<div class="a" style="left:1142px;top:849.0999999999999px;height:22px;line-height:22px;font-size:16px;color:#2d3034;white-space:nowrap">06/06/2025</div>
<div class="a" style="left:1355px;top:849.0999999999999px;height:22px;line-height:22px;font-size:16px;color:#2d3034;white-space:nowrap">2</div>
<div class="a" style="left:1528px;top:849.0999999999999px;height:22px;line-height:22px;font-size:16px;color:#2d3034;white-space:nowrap">Active</div>
<svg class="a" style="left:1703px;top:851.0999999999999px" width="18" height="17" viewBox="0 0 18 17"><path d="M9 2.5H3A1.5 1.5 0 0 0 1.5 4V14A1.5 1.5 0 0 0 3 15.5H13A1.5 1.5 0 0 0 14.5 14V9" stroke="#2a62c0" stroke-width="1.8" fill="none"/><path d="M15 0.8L17.2 3L10 10.2L7 11L7.8 8Z" fill="#2a62c0"/></svg>
<div class="a" style="left:342px;top:884.4px;width:207px;height:47.5px;background:#aaaaaa"></div>
<div class="a" style="left:551.5px;top:884.4px;width:351.5px;height:47.5px;background:#aaaaaa"></div>
<div class="a" style="left:905.5px;top:884.4px;width:212.5px;height:47.5px;background:#aaaaaa"></div>
<div class="a" style="left:1120.5px;top:884.4px;width:210.5px;height:47.5px;background:#aaaaaa"></div>
<div class="a" style="left:1333.5px;top:884.4px;width:170.5px;height:47.5px;background:#aaaaaa"></div>
<div class="a" style="left:1506.5px;top:884.4px;width:162.5px;height:47.5px;background:#aaaaaa"></div>
<div class="a" style="left:1671.5px;top:884.4px;width:177.5px;height:47.5px;background:#aaaaaa"></div>
<div class="a" style="left:363px;top:898.4px;height:22px;line-height:22px;font-size:16px;color:#2d3034;white-space:nowrap">100003734</div>
<div class="a" style="left:573px;top:898.4px;height:22px;line-height:22px;font-size:16px;color:#2d3034;white-space:nowrap">Proration on</div>
<div class="a" style="left:927px;top:898.4px;height:22px;line-height:22px;font-size:16px;color:#2d3034;white-space:nowrap">05/07/2025</div>
<div class="a" style="left:1142px;top:898.4px;height:22px;line-height:22px;font-size:16px;color:#2d3034;white-space:nowrap">00-00-0000</div>
<div class="a" style="left:1355px;top:898.4px;height:22px;line-height:22px;font-size:16px;color:#2d3034;white-space:nowrap">1</div>
<div class="a" style="left:1528px;top:898.4px;height:22px;line-height:22px;font-size:16px;color:#2d3034;white-space:nowrap">Inactive</div>
<svg class="a" style="left:1703px;top:900.4px" width="18" height="17" viewBox="0 0 18 17"><path d="M9 2.5H3A1.5 1.5 0 0 0 1.5 4V14A1.5 1.5 0 0 0 3 15.5H13A1.5 1.5 0 0 0 14.5 14V9" stroke="#2a62c0" stroke-width="1.8" fill="none"/><path d="M15 0.8L17.2 3L10 10.2L7 11L7.8 8Z" fill="#2a62c0"/></svg>
<div class="a" style="left:549px;top:935.7px;width:1px;height:45px;background:#a4a8ac"></div>
<div class="a" style="left:903px;top:935.7px;width:1px;height:45px;background:#a4a8ac"></div>
<div class="a" style="left:1118px;top:935.7px;width:1px;height:45px;background:#a4a8ac"></div>
<div class="a" style="left:1331px;top:935.7px;width:1px;height:45px;background:#a4a8ac"></div>
<div class="a" style="left:1504px;top:935.7px;width:1px;height:45px;background:#a4a8ac"></div>
<div class="a" style="left:1669px;top:935.7px;width:1px;height:45px;background:#a4a8ac"></div>
<div class="a" style="left:363px;top:947.7px;height:22px;line-height:22px;font-size:16px;color:#2d3034;white-space:nowrap">100003734</div>
<div class="a" style="left:573px;top:947.7px;height:22px;line-height:22px;font-size:16px;color:#2d3034;white-space:nowrap">Proration oFF</div>
<div class="a" style="left:927px;top:947.7px;height:22px;line-height:22px;font-size:16px;color:#2d3034;white-space:nowrap">05/07/2025</div>
<div class="a" style="left:1142px;top:947.7px;height:22px;line-height:22px;font-size:16px;color:#2d3034;white-space:nowrap">06/06/2025</div>
<div class="a" style="left:1355px;top:947.7px;height:22px;line-height:22px;font-size:16px;color:#2d3034;white-space:nowrap">1</div>
<div class="a" style="left:1528px;top:947.7px;height:22px;line-height:22px;font-size:16px;color:#2d3034;white-space:nowrap">Inactive</div>
<svg class="a" style="left:1703px;top:949.7px" width="18" height="17" viewBox="0 0 18 17"><path d="M9 2.5H3A1.5 1.5 0 0 0 1.5 4V14A1.5 1.5 0 0 0 3 15.5H13A1.5 1.5 0 0 0 14.5 14V9" stroke="#2a62c0" stroke-width="1.8" fill="none"/><path d="M15 0.8L17.2 3L10 10.2L7 11L7.8 8Z" fill="#2a62c0"/></svg>
<div class="a" style="left:1615px;top:1003px;width:75px;height:30px;border:1px solid #9a9a9a;border-radius:15px"></div>
<div class="a" style="left:1708px;top:1003px;width:27px;height:30px;background:#0c56c0;border-radius:14px"></div>
<div class="a" style="left:1750px;top:1003px;width:27px;height:30px;border:1px solid #9a9a9a;border-radius:14px"></div>
<div class="a" style="left:1794px;top:1003px;width:49px;height:30px;border:1px solid #9a9a9a;border-radius:15px"></div>
<svg class="a" style="left:914px;top:574px" width="81" height="81" viewBox="0 0 81 81"><circle cx="40.5" cy="40.5" r="34" stroke="#6f67b2" stroke-width="11" fill="none"/><path d="M43 6.6A34 34 0 0 1 74.4 43" stroke="#4129bf" stroke-width="11" fill="none"/></svg>
<div class="a" style="left:275px;top:468px;width:6px;height:467px;background:#050505;border-radius:3px"></div>
<div class="a" style="left:828px;top:138px;width:668px;height:57px;background:#b4b4b4;border-left:4px solid #2a9a30;border-radius:3px;box-shadow:0 0 14px rgba(0,0,20,.45)"></div>
<div class="a" style="left:855px;top:156px;height:22px;line-height:22px;font-size:15px;font-weight:bold;color:#36393d;white-space:nowrap;letter-spacing:-0.3px">Subscription charges deducted successfully from user wallet balance</div>
<svg class="a" style="left:1475px;top:162px" width="13" height="13" viewBox="0 0 13 13"><path d="M1 1L12 12M12 1L1 12" stroke="#6e7073" stroke-width="2"/></svg>
<div id="vscroll"></div>
<div class="a" style="left:1909px;top:132px;width:11px;height:771px;background:#8a8a8a;border-radius:5px"></div>
<div id="taskbar"></div>
<div class="a" style="left:0;top:1007px;width:1920px;height:1px;background:#4a4a52"></div>
<svg class="a" style="left:31px;top:1034px" width="34" height="19" viewBox="0 0 34 19"><rect x="0.5" y="0.5" width="33" height="18" rx="2" fill="#fff"/><rect x="1.5" y="1.5" width="18" height="16" rx="1" fill="#0a2a5a"/><rect x="14.5" y="1.5" width="18" height="16" rx="1" fill="#c8102e"/><path d="M12 18C12 13 14 11 16 10C15 8 16 5 19 5C21 5 22 7 22 9C24 10 26 13 28 18Z" fill="#fff"/><circle cx="6" cy="13" r="1.2" fill="#fff"/></svg>
<div class="a" style="left:46.0px;top:1018px;width:24px;height:24px;border-radius:12px;background:#f3909c;color:#111;font-size:16px;line-height:24px;text-align:center;letter-spacing:-0.5px">9+</div>
<svg class="a" style="left:229px;top:1027px" width="35" height="35" viewBox="0 0 35 35"><defs><linearGradient id="wg" x1="0" y1="0" x2="1" y2="1"><stop offset="0" stop-color="#6fe0ff"/><stop offset="1" stop-color="#1a8fe8"/></linearGradient></defs><rect x="0" y="0" width="16.5" height="16.5" rx="1.5" fill="url(#wg)"/><rect x="18.5" y="0" width="16.5" height="16.5" rx="1.5" fill="url(#wg)"/><rect x="0" y="18.5" width="16.5" height="16.5" rx="1.5" fill="url(#wg)"/><rect x="18.5" y="18.5" width="16.5" height="16.5" rx="1.5" fill="url(#wg)"/></svg>
<svg class="a" style="left:296px;top:1027px" width="36" height="36" viewBox="0 0 36 36"><circle cx="16" cy="15.5" r="12" stroke="#e6e6e6" stroke-width="3.6" fill="#3a3a3e"/><path d="M25 24.5L33 32.5" stroke="#e6e6e6" stroke-width="3.8" stroke-linecap="round"/></svg>
<div class="a" style="left:362px;top:1036px;width:27px;height:24px;border-radius:3px;background:#5a5a5e"></div>
<div class="a" style="left:371px;top:1027px;width:27px;height:25px;border-radius:3px;background:linear-gradient(135deg,#fafafa,#c8c8c8)"></div>
<div class="a" style="left:371px;top:1036px;width:18px;height:16px;background:#a9a9ad"></div>
<svg class="a" style="left:428px;top:1025px" width="36" height="36" viewBox="0 0 36 36"><circle cx="18" cy="18" r="15" fill="#0aa0e8"/><circle cx="9" cy="9" r="7" fill="#0aa0e8"/><circle cx="27" cy="27" r="7" fill="#0a90d8"/><text x="18" y="26" font-family="Liberation Sans" font-weight="bold" font-size="23" fill="#fff" text-anchor="middle">S</text></svg>
<div class="a" style="left:449.0px;top:1019px;width:24px;height:24px;border-radius:12px;background:#e5393b;color:#fff;font-size:16px;line-height:24px;text-align:center;letter-spacing:-0.5px">9+</div>
<div class="a" style="left:441.5px;top:1069px;width:9px;height:5px;border-radius:3px;background:#8d8d92"></div>
<svg class="a" style="left:495px;top:1029px" width="34" height="30" viewBox="0 0 34 30"><defs><linearGradient id="cpl" x1="0" y1="0" x2="0" y2="1"><stop offset="0" stop-color="#1e9af5"/><stop offset="0.5" stop-color="#6cc860"/><stop offset="1" stop-color="#f8c010"/></linearGradient><linearGradient id="cpr" x1="0" y1="0" x2="0.3" y2="1"><stop offset="0" stop-color="#a05cf0"/><stop offset="0.5" stop-color="#f06898"/><stop offset="1" stop-color="#f8a040"/></linearGradient></defs><path d="M7 0H22C24 0 25 1 26 3L27 6H20L14 21C13.5 22.5 12.5 23 11 23H3C1 23 0 21.5 0.5 19.5L4.5 3C5 1 6 0 7 0Z" fill="url(#cpl)"/><path d="M20 0H22C24 0 25 1 26 3L27 6H20Z" fill="#1850d8"/><path d="M27 30H12C10 30 9 29 8 27L7 24H14L20 9C20.5 7.5 21.5 7 23 7H31C33 7 34 8.5 33.5 10.5L29.5 27C29 29 28 30 27 30Z" fill="url(#cpr)"/><path d="M8 27L7 24H14L13 26Z" fill="#e84a20"/></svg>
<svg class="a" style="left:559px;top:1028px" width="37" height="32" viewBox="0 0 37 32"><path d="M0 3A2 2 0 0 1 2 1H12L15 4H35A2 2 0 0 1 37 6V30A2 2 0 0 1 35 32H2A2 2 0 0 1 0 30Z" fill="#f5b82e"/><rect x="0" y="7" width="37" height="25" rx="2" fill="#fcd45a"/><path d="M7 32V25A3 3 0 0 1 10 22H27A3 3 0 0 1 30 25V32Z" fill="#1f74c8"/><rect x="12" y="26" width="13" height="2" fill="#7ec0f8"/></svg>
<div class="a" style="left:573.5px;top:1069px;width:9px;height:5px;border-radius:3px;background:#8d8d92"></div>
<svg class="a" style="left:626px;top:1026px" width="36" height="36" viewBox="0 0 36 36"><defs><linearGradient id="eg" x1="0" y1="0.2" x2="1" y2="0.6"><stop offset="0" stop-color="#2aa6e8"/><stop offset="0.55" stop-color="#30c0d0"/><stop offset="1" stop-color="#5ada58"/></linearGradient><linearGradient id="eb" x1="0" y1="0" x2="1" y2="1"><stop offset="0" stop-color="#1e8ee0"/><stop offset="1" stop-color="#1258b0"/></linearGradient></defs><circle cx="18" cy="18" r="18" fill="url(#eg)"/><path d="M0 18C0 10 6 8.5 11 9C15 9.5 18 11.5 20 15L24 25C27 27.5 31 27.5 34.5 25C32 32 25 36 18 36C8 36 0 28 0 18Z" fill="url(#eb)"/><circle cx="18.5" cy="19.5" r="5.3" fill="#1d2230"/><path d="M20 24.5C23 25 28 25.5 35 23L34.8 25.3C29 27.5 24 27.5 20 24.5Z" fill="#1d2230"/></svg>
<div class="a" style="left:639.5px;top:1069px;width:9px;height:5px;border-radius:3px;background:#8d8d92"></div>
<svg class="a" style="left:692px;top:1027px" width="35" height="35" viewBox="0 0 35 35"><path d="M10 6V3A2 2 0 0 1 12 1H23A2 2 0 0 1 25 3V6" stroke="#2aa8e8" stroke-width="2" fill="none"/><rect x="0" y="5" width="35" height="30" rx="3" fill="#f3f3f3"/><rect x="10" y="11" width="7" height="7" fill="#f35325"/><rect x="18" y="11" width="7" height="7" fill="#81bc06"/><rect x="10" y="19" width="7" height="7" fill="#05a6f0"/><rect x="18" y="19" width="7" height="7" fill="#ffba08"/></svg>
<svg class="a" style="left:757px;top:1028px" width="38" height="33" viewBox="0 0 38 33"><path d="M10 8L26 1L38 8V28A3 3 0 0 1 35 31H13A3 3 0 0 1 10 28Z" fill="#1490df"/><path d="M10 14L38 8V28A3 3 0 0 1 35 31H13A3 3 0 0 1 10 28Z" fill="#28a8ea"/><path d="M26 1L38 8L24 14L12 9Z" fill="#0a64a8"/><rect x="0" y="6" width="18" height="18" rx="2" fill="#0f6cbd"/><circle cx="9" cy="15" r="5" stroke="#fff" stroke-width="2.5" fill="none"/></svg>
<svg class="a" style="left:824px;top:1027px" width="36" height="35" viewBox="0 0 36 35"><path d="M18 34C8 34 1 27 1 18C1 12 3 7 6 4C5 8 6 12 8 14C9 7 14 3 20 3C27 3 33 8 34 15C35 26 28 34 18 34Z" fill="#1a5fc8"/><path d="M8 18L18 25L28 18V15L18 21L8 15Z" fill="#bcd8f8"/><path d="M8 15H28L18 21Z" fill="#e8f2ff"/></svg>
<div class="a" style="left:844.0px;top:1019px;width:24px;height:24px;border-radius:12px;background:#e81e2a;color:#fff;font-size:16px;line-height:24px;text-align:center;letter-spacing:-0.5px">1</div>
<div class="a" style="left:837.5px;top:1069px;width:9px;height:5px;border-radius:3px;background:#8d8d92"></div>
<svg class="a" style="left:890px;top:1026px" width="36" height="36" viewBox="0 0 36 36"><circle cx="18" cy="18" r="18" fill="#fff"/><circle cx="18" cy="17.5" r="10.5" stroke="#29b43f" stroke-width="2.4" fill="none"/><path d="M8.5 27.5L10 22L13 25Z" fill="#29b43f"/><path d="M14 12C13 13 13 15 15 18C17 21 20 23 22 23C23 23 24 22 24 21L22 19.5L20.5 20.5C19 20 16.5 17.5 16 16L17 14.5L15.5 12Z" fill="#29b43f"/></svg>
<div class="a" style="left:910.0px;top:1018px;width:24px;height:24px;border-radius:12px;background:#d4a3e6;color:#111;font-size:16px;line-height:24px;text-align:center;letter-spacing:-0.5px">3</div>
<div class="a" style="left:903.5px;top:1069px;width:9px;height:5px;border-radius:3px;background:#8d8d92"></div>
<svg class="a" style="left:955px;top:1031px" width="37" height="25" viewBox="0 0 37 25"><rect x="0" y="0" width="37" height="25" rx="7" fill="#ff0000"/><path d="M14 7L24 12.5L14 18Z" fill="#fff"/></svg>
<svg class="a" style="left:1022px;top:1026px" width="36" height="36" viewBox="0 0 36 36"><circle cx="18" cy="18" r="18" fill="#f0401e"/><path d="M8 11L12.5 25H15.5L18 17L20.5 25H23.5L28 11H25L22 21L19.5 13H16.5L14 21L11 11Z" fill="#fff"/></svg>
<div class="a" style="left:1035.5px;top:1069px;width:9px;height:5px;border-radius:3px;background:#8d8d92"></div>
<div class="a" style="left:1079px;top:1014px;width:56px;height:59px;border-radius:7px;background:#3a1e40"></div>
<div class="a" style="left:1076px;top:1014px;width:53px;height:59px;border-radius:7px;background:#4a2c52"></div>
<svg class="a" style="left:1087px;top:1025px" width="37" height="37" viewBox="0 0 37 37"><circle cx="18.5" cy="18.5" r="18" fill="#2aa04a"/><path d="M18.5 0.5A18 18 0 0 1 34.1 9.5L18.5 9.5Z" fill="#e33b2e"/><path d="M2.9 9.5A18 18 0 0 1 18.5 0.5V9.5H18.5L10.7 23Z" fill="#e33b2e"/><path d="M34.1 9.5A18 18 0 0 1 18.5 36.5L26.3 23Z" fill="#fbc02d"/><circle cx="18.5" cy="18.5" r="8.5" fill="#fff"/><circle cx="18.5" cy="18.5" r="6.8" fill="#3a78e8"/></svg>
<div class="a" style="left:1107px;top:1018px;width:24px;height:24px;border-radius:50%;background:#e8e8e8"></div>
<svg class="a" style="left:1112px;top:1023px" width="14" height="14" viewBox="0 0 14 14"><path d="M2 12L5 3L7 10L10 3L12 11M1 7H13" stroke="#333" stroke-width="1" fill="none"/></svg>
<div class="a" style="left:1094.0px;top:1069px;width:24px;height:5px;border-radius:3px;background:#d7a6ea"></div>
<div class="a" style="left:1142px;top:1014px;width:60px;height:59px;border-radius:7px;background:#7b4149"></div>
<svg class="a" style="left:1153px;top:1026px" width="36" height="36" viewBox="0 0 36 36"><circle cx="18" cy="18" r="15" fill="#0aa0e8"/><circle cx="9" cy="9" r="7" fill="#0aa0e8"/><circle cx="27" cy="27" r="7" fill="#0a90d8"/><text x="18" y="26" font-family="Liberation Sans" font-weight="bold" font-size="23" fill="#fff" text-anchor="middle">S</text></svg>
<div class="a" style="left:1175.0px;top:1019px;width:24px;height:24px;border-radius:12px;background:#e5393b;color:#fff;font-size:16px;line-height:24px;text-align:center;letter-spacing:-0.5px">9+</div>
<div class="a" style="left:1167.0px;top:1069px;width:10px;height:5px;border-radius:3px;background:#f5a3ab"></div>
<svg class="a" style="left:1220px;top:1030px" width="36" height="30" viewBox="0 0 36 30"><circle cx="23" cy="5" r="4.5" fill="#7b83eb"/><circle cx="31" cy="7" r="3.5" fill="#5059c9"/><rect x="12" y="11" width="22" height="18" rx="8" fill="#7b83eb"/><rect x="0" y="6" width="18" height="18" rx="2" fill="#4b53bc"/><path d="M4 10H14M9 10V21" stroke="#fff" stroke-width="2.6"/></svg>
<div class="a" style="left:1236.0px;top:1018px;width:30px;height:24px;border-radius:12px;background:#d4a3e6;color:#111;font-size:16px;line-height:24px;text-align:center;letter-spacing:-0.5px">35</div>
<div class="a" style="left:1233.5px;top:1069px;width:9px;height:5px;border-radius:3px;background:#8d8d92"></div>
<div class="a" style="left:1275px;top:1010px;width:1px;height:70px;background:#8a7a90"></div>
<svg class="a" style="left:1296px;top:1026px" width="32" height="37" viewBox="0 0 32 37"><path d="M1 17C3 13 6 10 10 9.5L15 2L16.5 8.5C24 8.5 30 12 30.5 19C31 25 27 29 22 31L25 36L17 35L19 30C21 27 21 23 19 21C16 19 12 20 9 21C6 22 3 21 1 17Z" fill="#2b8ff0"/><circle cx="8" cy="13.5" r="1" fill="#1a3a6a"/></svg>
<div class="a" style="left:1307.5px;top:1069px;width:9px;height:5px;border-radius:3px;background:#8d8d92"></div>
<div class="a" style="left:1366px;top:1041px;width:5px;height:5px;border-radius:50%;background:#eee"></div>
<div class="a" style="left:1376px;top:1041px;width:5px;height:5px;border-radius:50%;background:#eee"></div>
<div class="a" style="left:1386px;top:1041px;width:5px;height:5px;border-radius:50%;background:#eee"></div>
<div class="a" style="left:1414px;top:1010px;width:1px;height:70px;background:#8a7a90"></div>
<svg class="a" style="left:1520px;top:1038px" width="18" height="11" viewBox="0 0 18 11"><path d="M1.5 9.5L9 2L16.5 9.5" stroke="#fff" stroke-width="2" fill="none"/></svg>
<svg class="a" style="left:1564px;top:1030px" width="28" height="28" viewBox="0 0 28 28"><path d="M3 12A10 10 0 0 1 22 7M22 2V7H17M25 16A10 10 0 0 1 6 21M6 26V21H11" stroke="#fff" stroke-width="1.5" fill="none"/><circle cx="19" cy="20" r="5.5" fill="#f7a21b"/></svg>
<svg class="a" style="left:1615px;top:1031px" width="20" height="26" viewBox="0 0 20 26"><rect x="6" y="1" width="8" height="15" rx="4" stroke="#e3a8f3" stroke-width="2" fill="none"/><path d="M2 11A8 8 0 0 0 18 11M10 19V25" stroke="#e3a8f3" stroke-width="2" fill="none"/></svg>
<svg class="a" style="left:1660px;top:1034px" width="26" height="19" viewBox="0 0 26 19"><path d="M1.5 7A16 16 0 0 1 24.5 7M5.5 11A10.5 10.5 0 0 1 20.5 11M9.5 14.5A5 5 0 0 1 16.5 14.5" stroke="#fff" stroke-width="1.8" fill="none"/><circle cx="13" cy="17" r="1.8" fill="#fff"/></svg>
<svg class="a" style="left:1696px;top:1031px" width="26" height="24" viewBox="0 0 26 24"><path d="M2 8H6L12 3V21L6 16H2Z" stroke="#fff" stroke-width="1.7" fill="none" stroke-linejoin="round"/><path d="M15.5 8.5A5 5 0 0 1 15.5 15.5M18.5 5.5A9 9 0 0 1 18.5 18.5" stroke="#fff" stroke-width="1.7" fill="none"/><path d="M21.5 3A12.5 12.5 0 0 1 21.5 21" stroke="#6a5a70" stroke-width="1.5" fill="none"/></svg>
<svg class="a" style="left:1732px;top:1031px" width="25" height="25" viewBox="0 0 25 25"><rect x="1.5" y="8" width="18" height="12" rx="2.5" stroke="#fff" stroke-width="2" fill="none"/><rect x="20" y="12" width="3" height="4" rx="1" fill="#fff"/><path d="M12 1L7 12H11L9 19L15 8H11Z" fill="#fff"/></svg>
<div class="a" style="left:1780px;top:1019px;width:76px;height:24px;line-height:24px;font-size:18px;color:#fff;text-align:right;white-space:nowrap">9:23 PM</div>
<div class="a" style="left:1770px;top:1043px;width:86px;height:24px;line-height:24px;font-size:18.5px;color:#fff;text-align:right;white-space:nowrap">5/7/2025</div>
<svg class="a" style="left:1866px;top:1031px" width="24" height="25" viewBox="0 0 24 25"><path d="M10 3C6 4 4 7 4 11V16L2 19H18L16 16V11" fill="#fff"/><path d="M7.5 21H12.5A2.5 2.5 0 0 1 7.5 21Z" fill="#fff"/><path d="M9 9H14L9 15H14M15 2H21L15 8H21" stroke="#3a1a3a" stroke-width="1.6" fill="none"/><path d="M15 2H21L15 8H21" stroke="#fff" stroke-width="1.4" fill="none"/></svg>
</body></html>
